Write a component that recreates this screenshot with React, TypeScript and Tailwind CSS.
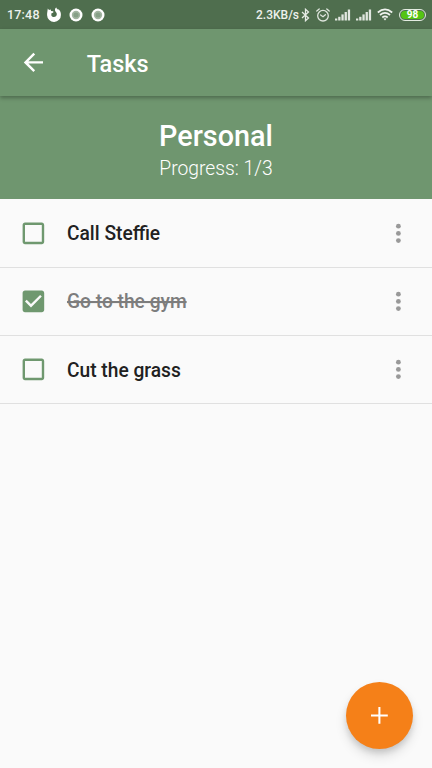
import React from "react";

type Task = { title: string; done: boolean };

const tasks: Task[] = [
  { title: "Call Steffie", done: false },
  { title: "Go to the gym", done: true },
  { title: "Cut the grass", done: false },
];

function FirefoxIcon() {
  return (
    <svg className="h-[16px] w-[16px]" viewBox="0 0 16 16">
      <path
        fill="#fff"
        d="M1.800 1.600 3 3 4.800 2.400 5 4 7.300 4.300 7.300 5.400 5.300 6.600 5.400 8.700C6.500 10.300 9 10.400 10.200 8.900 11.200 7.600 10.900 6.200 10 5.200 9.200 4.200 8.900 3.600 9 2.400 9.100 1.500 9.700 .9 10.400 .6 10.500 1.600 11.300 2 12 2.700L12.600 2.300C14.300 4 15 5.600 14.900 7.900A6.900 6.900 0 0 1 1.100 8.300C1 6 1.500 4.300 1.800 1.600Z"
      />
    </svg>
  );
}

function DotIcon() {
  return (
    <svg className="h-[14px] w-[14px]" viewBox="0 0 14 14">
      <circle cx="7" cy="7" r="6.500" fill="#fff" />
      <circle cx="7" cy="7" r="4.200" fill="#a3b5a2" />
      <circle cx="7" cy="7" r="2.500" fill="#86a087" />
    </svg>
  );
}

function BluetoothIcon() {
  return (
    <svg className="h-[14px] w-[9px]" viewBox="0 0 9 14" fill="none" stroke="#e6ebe5" strokeWidth="1.300">
      <path d="M1 4 7.500 10 4.500 12.700V1.300L7.500 4 1 10" />
    </svg>
  );
}

function AlarmIcon() {
  return (
    <svg className="h-[14px] w-[14px]" viewBox="0 0 14 14" fill="none" stroke="#dfe6de" strokeWidth="1.300" strokeLinecap="round">
      <circle cx="7" cy="7.700" r="5.300" />
      <path d="M.8 3 3.200 1M13.200 3 10.800 1M4.600 7 7 8.700 9.400 6.700" />
    </svg>
  );
}

function SignalIcon() {
  return (
    <svg className="h-[12px] w-[16px]" viewBox="0 0 16 12" fill="#e1e7e0">
      <rect x="0" y="9.500" width="2.300" height="2" />
      <rect x="3.200" y="7.800" width="2.300" height="3.700" />
      <rect x="6.400" y="5.400" width="2.300" height="6.100" />
      <rect x="9.600" y="3" width="2.300" height="8.500" />
      <rect x="12.800" y="0.500" width="2.300" height="11" />
    </svg>
  );
}

function WifiIcon() {
  return (
    <svg className="h-[13px] w-[16px]" viewBox="0 0 16 13" fill="none" stroke="#f0f3ef" strokeWidth="1.700">
      <path d="M.8 4.500Q8-1.600 15.200 4.500M3 7Q8 2.700 13 7M5.300 9.500Q8 7.200 10.700 9.500" />
      <path d="M8 12.400 6.500 10.800Q8 9.800 9.500 10.800Z" fill="#f0f3ef" stroke="none" />
    </svg>
  );
}

function StatusBar() {
  return (
    <div className="flex h-[29px] shrink-0 items-center bg-[#4f6e4e] pr-[6px] pl-[7px] text-white">
      <span className="w-[39px] pt-px text-[12.500px] font-medium tracking-[0.200px] text-[#edf1ed]">17:48</span>
      <FirefoxIcon />
      <span className="ml-[7px] flex gap-[8px]">
        <DotIcon />
        <DotIcon />
      </span>
      <span className="ml-auto w-[45px] text-[12px] font-medium whitespace-nowrap text-[#edf1ed]">2.3KB/s</span>
      <BluetoothIcon />
      <span className="ml-[6px] flex items-center">
        <AlarmIcon />
        <span className="ml-[5px] flex gap-[5px]">
          <SignalIcon />
          <SignalIcon />
        </span>
        <span className="ml-[5px]">
          <WifiIcon />
        </span>
      </span>
      <span className="ml-[6px] flex h-[12px] w-[27px] items-center justify-center rounded-full border border-[#e4ece2] p-px">
        <span className="flex h-[8px] w-full items-center justify-center rounded-full bg-[#55c413] text-[10px] leading-none font-bold">
          98
        </span>
      </span>
    </div>
  );
}

function Checkbox({ checked }: { checked: boolean }) {
  return (
    <svg className="h-[28.800px] w-[28.800px]" viewBox="0 0 24 24" fill="#6f986f">
      {checked ? (
        <path d="M19 3H5c-1.110 0-2 .9-2 2v14c0 1.100.89 2 2 2h14c1.110 0 2-.9 2-2V5c0-1.100-.89-2-2-2zm-9 14l-5-5 1.410-1.410L10 14.170l7.590-7.590L19 8l-9 9z" />
      ) : (
        <path d="M19 5v14H5V5h14m0-2H5c-1.100 0-2 .9-2 2v14c0 1.100.9 2 2 2h14c1.100 0 2-.9 2-2V5c0-1.100-.9-2-2-2z" />
      )}
    </svg>
  );
}

function TaskRow({ task }: { task: Task }) {
  return (
    <li className="flex h-[68.400px] items-center border-b border-[#e0e0e0] pr-[19.200px] pl-[19.200px]">
      <Checkbox checked={task.done} />
      <span
        className={
          task.done
            ? "ml-[19px] grow scale-y-[1.04] pt-[3px] text-[19.200px] font-medium text-[#7d7d7d] line-through decoration-[1.500px]"
            : "ml-[19px] grow scale-y-[1.04] pt-[3px] text-[19.200px] font-medium text-[#212121]"
        }
      >
        {task.title}
      </span>
      <svg className="h-[28.800px] w-[28.800px]" viewBox="0 0 24 24" fill="#999">
        <circle cx="12" cy="6" r="2" />
        <circle cx="12" cy="12" r="2" />
        <circle cx="12" cy="18" r="2" />
      </svg>
    </li>
  );
}

export default function App() {
  return (
    <div className="relative flex h-[768px] w-[432px] flex-col overflow-hidden bg-[#fafafa] font-['Roboto','Liberation_Sans',sans-serif]">
      <StatusBar />
      <header className="z-10 flex h-[67px] shrink-0 items-center bg-[#6f966f] pl-[19px] text-white shadow-[0_2px_4px_rgba(0,0,0,0.300)]">
        <svg className="h-[28.800px] w-[28.800px]" viewBox="0 0 24 24" fill="currentColor">
          <path d="M20 11H7.830l5.590-5.590L12 4l-8 8 8 8 1.410-1.410L7.830 13H20v-2z" />
        </svg>
        <h1 className="ml-[39px] scale-y-[1.03] pt-[2px] text-[23.500px] leading-[28px] font-medium">Tasks</h1>
      </header>
      <section className="flex h-[103px] shrink-0 flex-col items-center bg-[#6f966f] pt-[23px] text-white">
        <h2 className="text-[28.800px] leading-[34px] font-medium">Personal</h2>
        <p className="scale-y-[1.04] text-[19.300px] leading-[31px] font-light">Progress: 1/3</p>
      </section>
      <ul className="pt-[0.300px]">
        {tasks.map((task) => (
          <TaskRow key={task.title} task={task} />
        ))}
      </ul>
      <button
        aria-label="Add task"
        className="absolute right-[19px] bottom-[19px] flex h-[67px] w-[67px] items-center justify-center rounded-full bg-[#f58018] text-white shadow-[0_4px_6px_-1px_rgba(0,0,0,0.140),0_7px_12px_rgba(0,0,0,0.120)]"
      >
        <svg className="h-[28.800px] w-[28.800px]" viewBox="0 0 24 24" fill="currentColor">
          <path d="M19 12.850h-6.150V19h-1.700v-6.150H5v-1.700h6.150V5h1.700v6.150H19z" />
        </svg>
      </button>
    </div>
  );
}
